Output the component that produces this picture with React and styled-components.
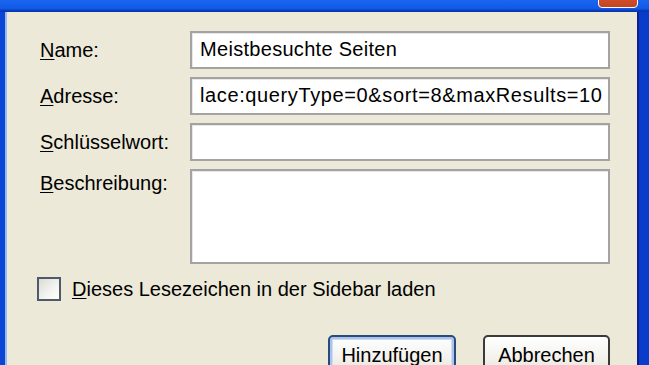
import React from "react";
import styled, { createGlobalStyle } from "styled-components";

const Global = createGlobalStyle`
  html, body { margin: 0; padding: 0; overflow: hidden; background: #ECE9D8; }
  body { font-family: "Liberation Sans", Arial, sans-serif; }
  * { box-sizing: border-box; }
`;

const Window = styled.div`
  width: 649px;
  height: 365px;
  overflow: hidden;
  display: flex;
  flex-direction: column;
  background: #0b4fdc;
`;

const TitleBar = styled.div`
  height: 12px;
  flex: none;
  display: flex;
  justify-content: flex-end;
  align-items: flex-end;
  overflow: hidden;
  padding-right: 11px;
  background: linear-gradient(#1a66f0, #0f5ae6 70%, #0a3fc0 85%, #0633a8);
`;

const CloseButton = styled.div`
  width: 40px;
  height: 24px;
  margin-bottom: 4px;
  border: 1.5px solid #ffffff;
  border-radius: 4px;
  background: linear-gradient(#e4805f, #d2502c 60%, #c24422);
`;

const Frame = styled.div`
  flex: 1;
  display: flex;
  border-left: 5px solid #0a45d6;
  border-right: 10px solid #0a3ccc;
`;

const Client = styled.div`
  flex: 1;
  background: #ECE9D8;
  border-left: 2px solid #9cb8f0;
  border-right: 2px solid #0d1f8a;
  padding: 19px 27px 0 33px;
  display: flex;
  flex-direction: column;
`;

const Form = styled.div`
  display: grid;
  grid-template-columns: 150px 420px;
  row-gap: 8px;
`;

const Label = styled.label`
  font-size: 20px;
  color: #000;
  line-height: 23px;
  align-self: ${(p) => (p.$top ? "start" : "center")};
  padding-top: ${(p) => (p.$top ? "3px" : "0")};
`;

const Key = styled.span`
  text-decoration: underline;
  text-underline-offset: 2px;
  text-decoration-thickness: 1px;
`;

const Field = styled.div`
  height: ${(p) => p.$h || 38}px;
  background: #fff;
  border: 2px solid #a3a3a3;
  box-shadow: inset 1px 1px 0 #e8e8e8;
  font-size: 20px;
  line-height: 23px;
  letter-spacing: ${(p) => p.$ls || 0}px;
  color: #000;
  padding: 5px 0 0 8px;
  white-space: nowrap;
  overflow: hidden;
`;

const CheckRow = styled.div`
  display: flex;
  align-items: center;
  gap: 11px;
  margin: 13px 0 0 -3px;
  font-size: 20px;
  line-height: 23px;
  color: #000;
`;

const CheckBox = styled.span`
  width: 24px;
  height: 24px;
  border: 2px solid #4e5a68;
  background: linear-gradient(135deg, #dcdcd6, #f4f4f0 60%, #ffffff);
`;

const ButtonRow = styled.div`
  display: flex;
  justify-content: flex-end;
  gap: 27px;
  margin-top: 34px;
`;

const Button = styled.div`
  width: ${(p) => p.$w}px;
  height: 42px;
  flex: none;
  border: 2px solid ${(p) => (p.$default ? "#2c4a78" : "#3a3a3a")};
  border-radius: 5px;
  background: linear-gradient(#ffffff, #f4f3ee 50%, #e6e3d6);
  box-shadow: ${(p) =>
    p.$default ? "inset 0 0 0 2px #a8c4ee, inset 0 0 0 3px #cfdcf5" : "inset 0 -2px 0 #d6d0c0"};
  font-size: 20px;
  line-height: 23px;
  color: #000;
  display: flex;
  justify-content: center;
  padding-top: 7px;
`;

export default function App() {
  return (
    <>
      <Global />
      <Window>
        <TitleBar>
          <CloseButton />
        </TitleBar>
        <Frame>
          <Client>
            <Form>
              <Label><Key>N</Key>ame:</Label>
              <Field $ls={0.3}>Meistbesuchte Seiten</Field>
              <Label><Key>A</Key>dresse:</Label>
              <Field $ls={0.62}>lace:queryType=0&amp;sort=8&amp;maxResults=10</Field>
              <Label><Key>S</Key>chlüsselwort:</Label>
              <Field />
              <Label $top><Key>B</Key>eschreibung:</Label>
              <Field $h={95} />
            </Form>
            <CheckRow>
              <CheckBox />
              <span><Key>D</Key>ieses Lesezeichen in der Sidebar laden</span>
            </CheckRow>
            <ButtonRow>
              <Button $w={128} $default>Hinzufügen</Button>
              <Button $w={127}>Abbrechen</Button>
            </ButtonRow>
          </Client>
        </Frame>
      </Window>
    </>
  );
}
